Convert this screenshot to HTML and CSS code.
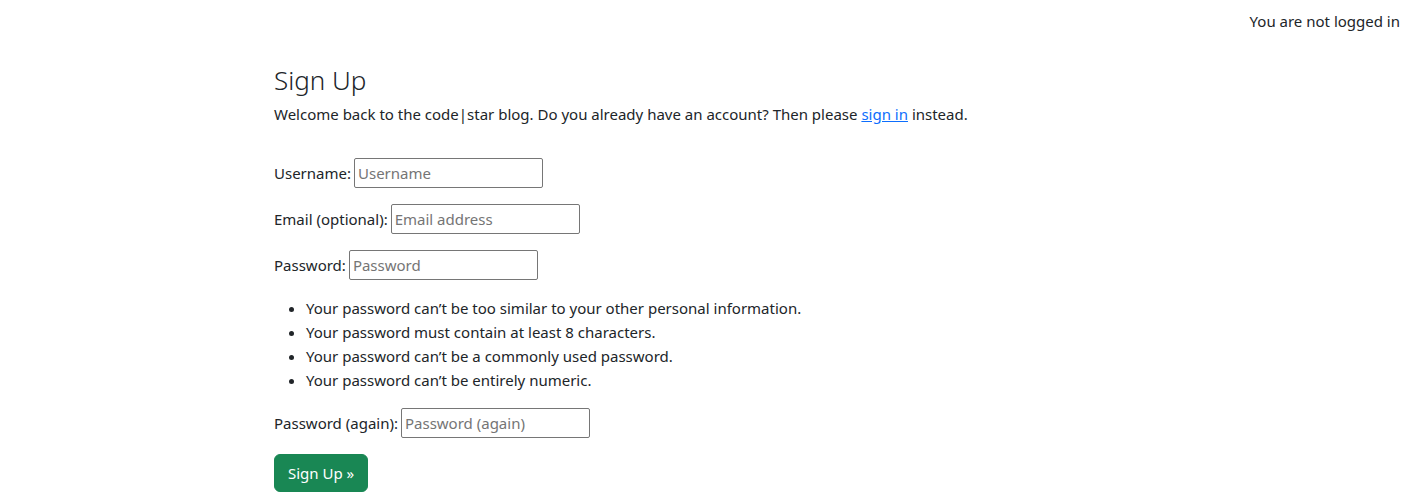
FILE: index.html
```html
<!DOCTYPE html>
<html lang="en">
<head>
<meta charset="utf-8">
<title>Sign Up</title>
<link rel="stylesheet" href="styles.css">
</head>
<body>
<header class="topbar">
  <span class="status">You are not logged in</span>
</header>
<main class="content">
  <h3 class="title">Sign Up</h3>
  <p class="intro">Welcome back to the code|star blog. Do you already have an account? Then please <a href="#">sign in</a> instead.</p>
  <form class="signup">
    <p class="field"><label for="u">Username:</label> <input id="u" type="text" placeholder="Username"></p>
    <p class="field"><label for="e">Email (optional):</label> <input id="e" type="email" placeholder="Email address"></p>
    <p class="field"><label for="p1">Password:</label> <input id="p1" type="password" placeholder="Password"></p>
    <ul class="rules">
      <li>Your password can’t be too similar to your other personal information.</li>
      <li>Your password must contain at least 8 characters.</li>
      <li>Your password can’t be a commonly used password.</li>
      <li>Your password can’t be entirely numeric.</li>
    </ul>
    <p class="field"><label for="p2">Password (again):</label> <input id="p2" type="password" placeholder="Password (again)"></p>
    <button class="btn" type="submit">Sign Up »</button>
  </form>
</main>
</body>
</html>
```
FILE: styles.css
```css
html, body {
  margin: 0;
  padding: 0;
  background: #fff;
}
body {
  font-family: "Noto Sans", "Open Sans", sans-serif;
  font-size: 15px;
  line-height: 24px;
  color: #212529;
}
.topbar {
  display: flex;
  justify-content: flex-end;
  padding: 9px 14px 0 0;
  height: 51px;
  box-sizing: border-box;
}
.content {
  padding-left: 274px;
}
.title {
  margin: 12px 0 5px;
  font-size: 26px;
  font-weight: 300;
  line-height: 34px;
  letter-spacing: 0;
}
.intro {
  margin: 0 0 32px;
}
.signup { margin: 0; }
.field {
  margin: 0 0 16px;
  display: flex;
  align-items: center;
  gap: 3px;
  height: 30px;
}
.field input {
  width: 189px;
  height: 30px;
  box-sizing: border-box;
  border: 1px solid #767676;
  border-radius: 2px;
  padding: 1px 3px;
  font: inherit;
  color: #212529;
}
.field input::placeholder { color: #757575; }
.rules {
  margin: 0 0 16px;
  padding-left: 32px;
}
a { color: #0d6efd; }
.btn {
  background: #198754;
  color: #fff;
  border: 1px solid #198754;
  border-radius: 6px;
  padding: 6px 13px;
  height: 38px;
  font: inherit;
  cursor: pointer;
}
```
